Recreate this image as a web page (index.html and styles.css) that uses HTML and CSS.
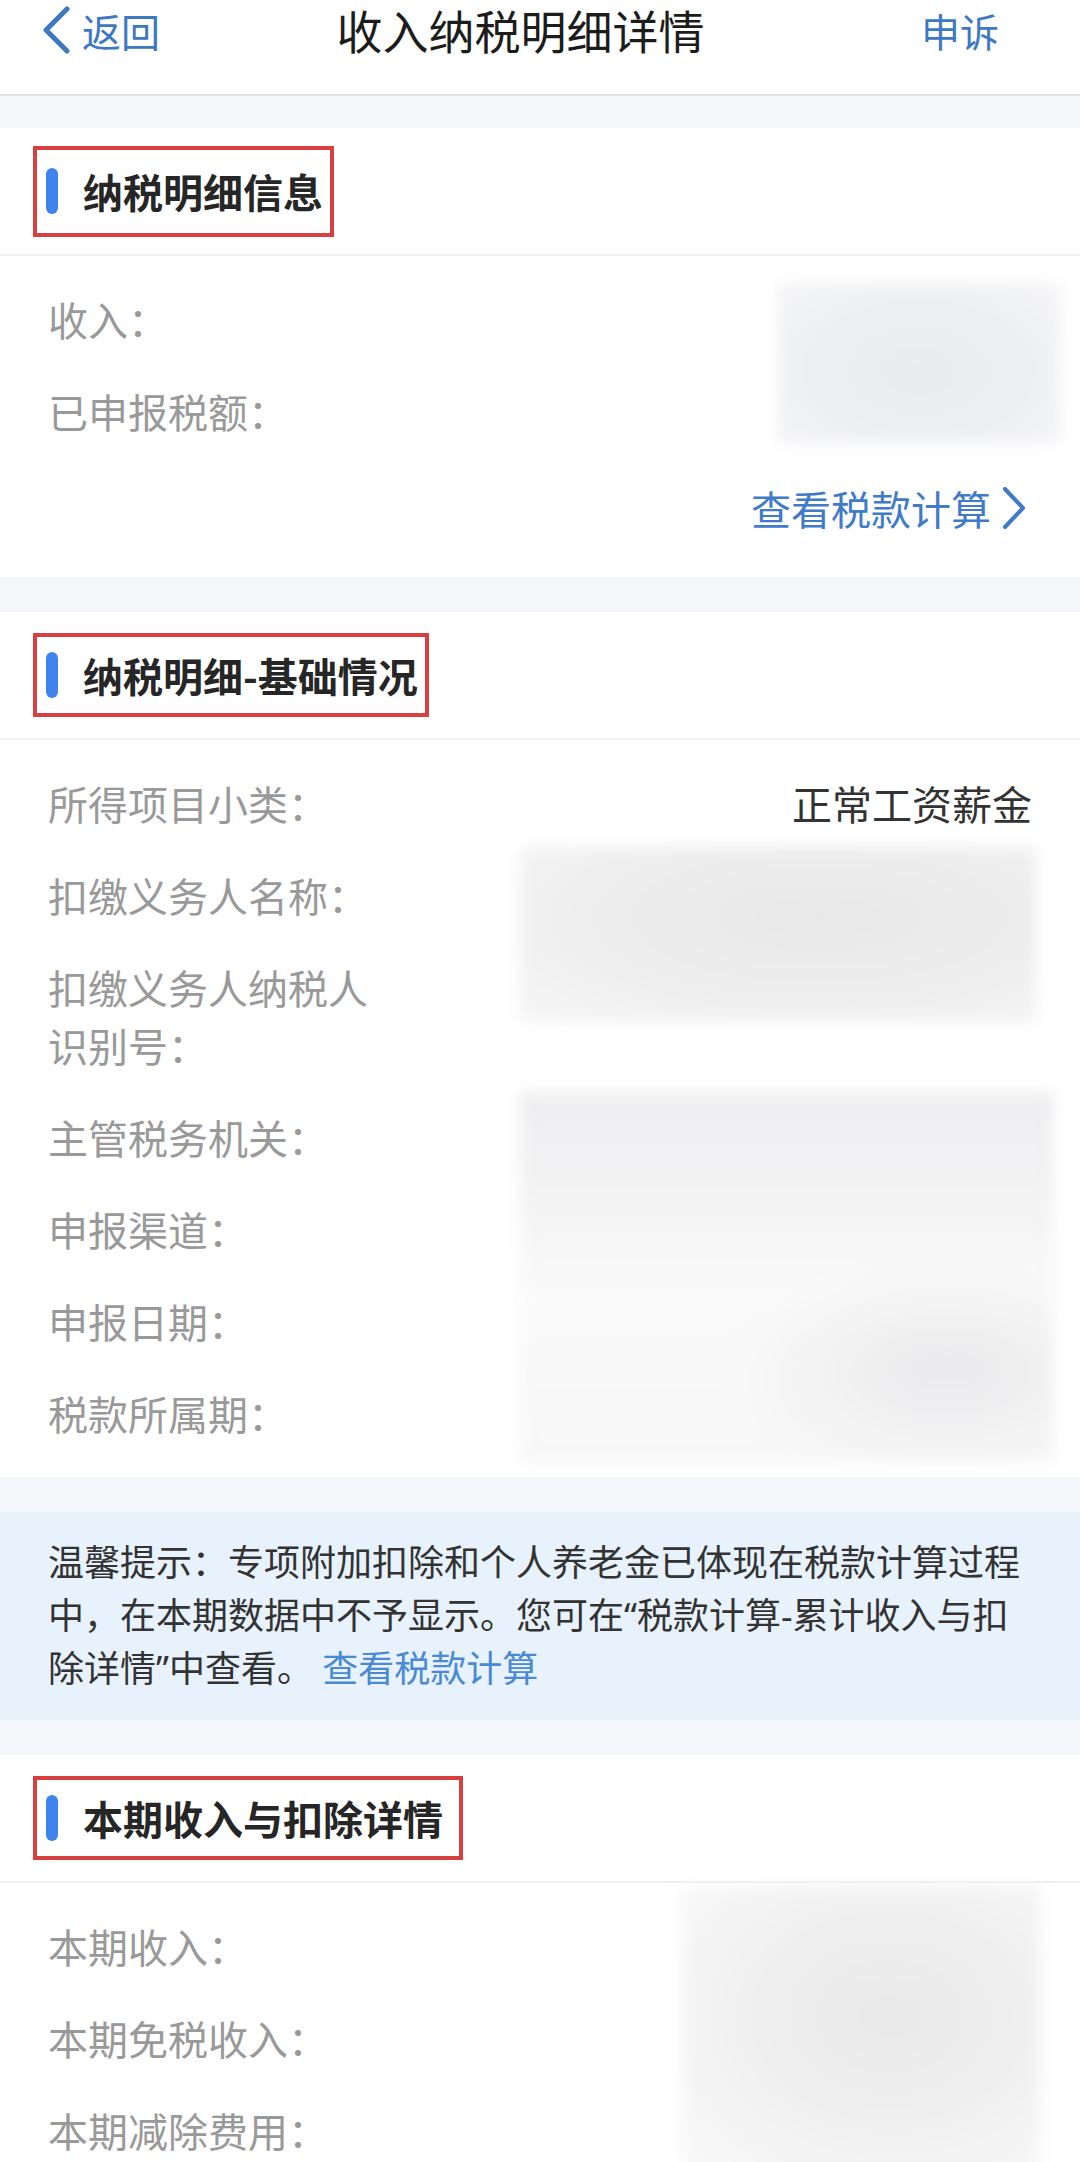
FILE: index.html
```html
<!DOCTYPE html>
<html lang="zh-CN">
<head>
<meta charset="utf-8">
<title>收入纳税明细详情</title>
<link rel="stylesheet" href="styles.css">
</head>
<body>
<header class="nav">
  <div class="nav-bar">
    <a class="nav-back">
      <svg class="nav-back-icon" width="28" height="48" viewBox="0 0 28 48" aria-hidden="true"><path d="M25 3 L4 24 L25 45" fill="none" stroke="currentColor" stroke-width="5" stroke-linecap="round" stroke-linejoin="round"/></svg>
      <span>返回</span>
    </a>
    <h1 class="nav-title">收入纳税明细详情</h1>
    <a class="nav-action">申诉</a>
  </div>
</header>

<main>
  <section class="card card-first">
    <div class="card-head">
      <h2 class="sec-title sec-title-tall"><i class="sec-bar"></i>纳税明细信息</h2>
    </div>
    <div class="kv kv-summary">
      <div class="kv-label">收入：</div>
      <div class="redact redact-a"></div>
      <div class="kv-label">已申报税额：</div>
      <a class="kv-link">查看税款计算<svg width="24" height="42" viewBox="0 0 24 42" aria-hidden="true"><path d="M3 2 L21 21 L3 40" fill="none" stroke="currentColor" stroke-width="4" stroke-linecap="round" stroke-linejoin="round"/></svg></a>
    </div>
  </section>

  <section class="card">
    <div class="card-head">
      <h2 class="sec-title"><i class="sec-bar"></i>纳税明细-基础情况</h2>
    </div>
    <div class="kv">
      <div class="kv-label">所得项目小类：</div>
      <div class="kv-value">正常工资薪金</div>
      <div class="redact redact-b"></div>
      <div class="redact redact-c"></div>
      <div class="kv-label">扣缴义务人名称：</div>
      <div class="kv-label">扣缴义务人纳税人识别号：</div>
      <div class="kv-label">主管税务机关：</div>
      <div class="kv-label">申报渠道：</div>
      <div class="kv-label">申报日期：</div>
      <div class="kv-label">税款所属期：</div>
    </div>
  </section>

  <aside class="notice">温馨提示：专项附加扣除和个人养老金已体现在税款计算过程中，在本期数据中不予显示。您可在“税款计算-累计收入与扣除详情”中查看。 <a class="notice-link">查看税款计算</a></aside>

  <section class="card">
    <div class="card-head">
      <h2 class="sec-title sec-title-wide"><i class="sec-bar"></i>本期收入与扣除详情</h2>
    </div>
    <div class="kv">
      <div class="redact redact-d"></div>
      <div class="kv-label">本期收入：</div>
      <div class="kv-label">本期免税收入：</div>
      <div class="kv-label">本期减除费用：</div>
    </div>
  </section>
</main>
</body>
</html>
```

FILE: styles.css
```css
html, body {
  margin: 0;
  padding: 0;
}

body {
  background: #f4f6f9;
  font-family: "Noto Sans CJK SC", "Noto Sans", sans-serif;
  color: #333;
}

a {
  text-decoration: none;
}

/* ---------- navigation ---------- */
.nav {
  background: #fff;
  height: 94px;
  border-bottom: 2px solid #e2e3e5;
}

.nav-bar {
  display: grid;
  grid-template-columns: 1fr auto 1fr;
  align-items: center;
  height: 60px;
  padding: 0 81px 0 42px;
}

.nav-back {
  justify-self: start;
  display: flex;
  align-items: center;
  gap: 12px;
  color: #3d78c2;
  font-size: 39px;
  line-height: 1.2;
}

.nav-back-icon {
  display: block;
}

.nav-title {
  margin: 0;
  font-size: 46px;
  font-weight: 400;
  line-height: 1.2;
  color: #1c1c1c;
}

.nav-action {
  justify-self: end;
  color: #3d78c2;
  font-size: 39px;
  line-height: 1.2;
}

/* ---------- cards ---------- */
.card {
  background: #fff;
  margin-top: 35px;
}

.card-first {
  margin-top: 32px;
}

.card-head {
  height: 126px;
  display: flex;
  align-items: center;
  padding-left: 33px;
  border-bottom: 2px solid #eeeff1;
}

.sec-title {
  margin: 0;
  display: inline-flex;
  align-items: center;
  gap: 25px;
  box-sizing: border-box;
  height: 84px;
  padding: 0 7px 0 9px;
  border: 4px solid #d8403f;
  font-size: 40px;
  font-weight: 700;
  line-height: 1;
  color: #262626;
}

.sec-title-tall {
  height: 91px;
}

.sec-title-wide {
  padding-right: 16px;
}

.sec-bar {
  display: block;
  width: 12px;
  height: 46px;
  border-radius: 6px;
  background: #3f83ee;
}

/* ---------- key / value grid ---------- */
.kv {
  display: grid;
  grid-template-columns: 330px 1fr;
  padding: 17px 48px 18px;
}

.kv-summary {
  padding-bottom: 40px;
}

.kv-label {
  grid-column: 1;
  padding: 17px 0;
  font-size: 40px;
  line-height: 58px;
  color: #999;
}

.kv-value {
  grid-column: 2;
  justify-self: end;
  padding: 17px 0;
  font-size: 40px;
  line-height: 58px;
  color: #333;
}

.kv-link {
  grid-column: 1 / -1;
  justify-self: end;
  display: flex;
  align-items: center;
  gap: 11px;
  margin: 22px 6px 0 0;
  font-size: 40px;
  line-height: 58px;
  color: #3f7bc8;
}

.kv-link svg {
  display: block;
}

/* redacted (blurred) values */
.redact {
  grid-column: 2;
  justify-self: end;
  align-self: stretch;
  filter: blur(7px);
}

.redact-a {
  grid-row: 1 / span 2;
  width: 282px;
  margin: 10px -28px 14px 0;
  background: radial-gradient(ellipse at 50% 55%, #eaebed 0%, #eeeff1 55%, #f5f5f7 100%);
}

.redact-b {
  grid-row: 2 / span 2;
  width: 516px;
  margin: -2px -4px 69px 0;
  background: radial-gradient(ellipse at 58% 40%, #e8e8e8 0%, #ededed 50%, #f6f6f6 100%);
}

.redact-c {
  grid-row: 4 / span 4;
  width: 534px;
  margin: 1px -22px -3px 0;
  background:
    radial-gradient(ellipse 40% 30% at 80% 75%, rgba(232,232,234,0.9), rgba(232,232,234,0) 100%),
    linear-gradient(180deg, #eeeef0 0%, #f3f3f4 30%, #fafafa 55%, #f7f7f8 100%);
}

.redact-d {
  grid-row: 1 / span 3;
  width: 358px;
  margin: -14px -8px 0 0;
  background: radial-gradient(ellipse at 58% 45%, #e9e9ea 0%, #efeff0 45%, #fafafa 100%);
}

/* ---------- notice ---------- */
.notice {
  display: block;
  margin-top: 35px;
  background: #e8f2fd;
  padding: 24px 57px 25px 48px;
  font-family: "Noto Sans", "Noto Sans CJK SC", sans-serif;
  font-size: 36px;
  line-height: 53px;
  color: #333;
}

.notice-link {
  color: #4a8ad4;
}
```
